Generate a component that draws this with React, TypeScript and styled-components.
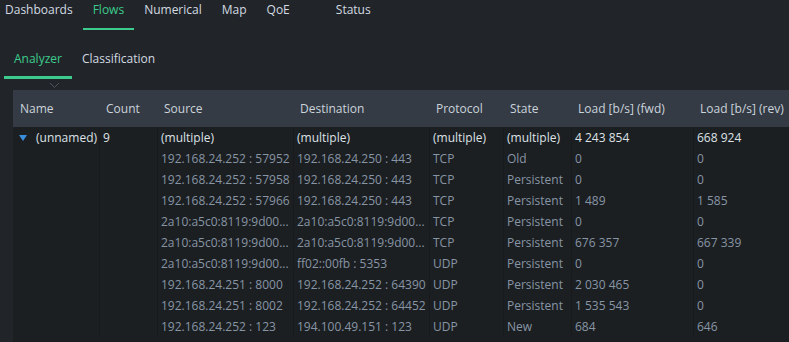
import React from "react";
import styled, { createGlobalStyle } from "styled-components";

const GlobalStyle = createGlobalStyle`
  html, body {
    margin: 0;
    padding: 0;
    background: #212529;
    font-family: "Open Sans", "Noto Sans", sans-serif;
    font-size: 12px;
    overflow: hidden;
  }
`;

const columns = "86px 58px 136px 136px 74px 68px 122px 1fr";

const headers = ["Name", "Count", "Source", "Destination", "Protocol", "State", "Load [b/s] (fwd)", "Load [b/s] (rev)"];

// long IPv6 addresses are shown cut, as the table does
const v6 = "2a10:a5c0:8119:9d00...";

const flows = [
  ["192.168.24.252 : 57952", "192.168.24.250 : 443", "TCP", "Old", "0", "0"],
  ["192.168.24.252 : 57958", "192.168.24.250 : 443", "TCP", "Persistent", "0", "0"],
  ["192.168.24.252 : 57966", "192.168.24.250 : 443", "TCP", "Persistent", "1 489", "1 585"],
  [v6, v6, "TCP", "Persistent", "0", "0"],
  [v6, v6, "TCP", "Persistent", "676 357", "667 339"],
  [v6, "ff02::00fb : 5353", "UDP", "Persistent", "0", "0"],
  ["192.168.24.251 : 8000", "192.168.24.252 : 64390", "UDP", "Persistent", "2 030 465", "0"],
  ["192.168.24.251 : 8002", "192.168.24.252 : 64452", "UDP", "Persistent", "1 535 543", "0"],
  ["192.168.24.252 : 123", "194.100.49.151 : 123", "UDP", "New", "684", "646"],
];

const App = () => {
  return (
    <Page>
      <GlobalStyle />
      <TopTabs>
        <TopTab>Dashboards</TopTab>
        <TopTab active>Flows</TopTab>
        <TopTab>Numerical</TopTab>
        <TopTab>Map</TopTab>
        <TopTab>QoE</TopTab>
        <TopTab gapLeft={26}>Status</TopTab>
      </TopTabs>
      <SubTabs>
        <SubTab active>Analyzer</SubTab>
        <SubTab>Classification</SubTab>
      </SubTabs>
      <Table>
        <HeaderRow>
          {headers.map((h, i) => (
            <HeaderCell key={h}>
              {i === 0 && (
                <SortMark width="9" height="5" viewBox="0 0 9 5">
                  <path d="M0 0 L4.5 4.5 L9 0" fill="none" stroke="#4a535e" strokeWidth="1" />
                </SortMark>
              )}
              {h}
            </HeaderCell>
          ))}
        </HeaderRow>
        <Body>
          <Row>
            <NameCell>
              <svg width="8" height="6" viewBox="0 0 8 6">
                <path d="M0 0 H8 L4 6 Z" fill="#3a8fdc" />
              </svg>
              (unnamed)
            </NameCell>
            <Cell bright>9</Cell>
            <Cell bright>(multiple)</Cell>
            <Cell bright>(multiple)</Cell>
            <Cell bright>(multiple)</Cell>
            <Cell bright>(multiple)</Cell>
            <Cell bright>4 243 854</Cell>
            <Cell bright>668 924</Cell>
          </Row>
          {flows.map((f, i) => (
            <Row key={i}>
              <Cell />
              <Cell />
              {f.map((v, j) => (
                <Cell key={j}>{v}</Cell>
              ))}
            </Row>
          ))}
        </Body>
      </Table>
    </Page>
  );
};

export default App;

const Page = styled.div`
  width: 789px;
  height: 342px;
  background: #212529;
  overflow: hidden;
`;

const TopTabs = styled.div`
  display: flex;
  height: 30px;
  margin-left: -5px;
`;

const TopTab = styled.div<{ active?: boolean; gapLeft?: number }>`
  padding: 1px 10px 0;
  margin-left: ${(p) => p.gapLeft ?? 0}px;
  height: 27px;
  line-height: 17px;
  color: ${(p) => (p.active ? "#3ccb8d" : "#d3dae1")};
  border-bottom: 2px solid ${(p) => (p.active ? "#3ccb8d" : "transparent")};
`;

const SubTabs = styled.div`
  display: flex;
  height: 50px;
  padding: 20px 0 0 4px;
  box-sizing: border-box;
  margin-bottom: 10px;
`;

const SubTab = styled.div<{ active?: boolean }>`
  padding: 0 10px;
  height: 29px;
  line-height: 18px;
  color: ${(p) => (p.active ? "#3ccb8d" : "#d3dae1")};
  border-bottom: 3px solid ${(p) => (p.active ? "#3ccb8d" : "transparent")};
  box-sizing: border-box;
`;

const Table = styled.div`
  margin-left: 13px;
  background: #1c1f22;
  height: 252px;
`;

const HeaderRow = styled.div`
  display: grid;
  grid-template-columns: ${columns};
  height: 37px;
  background: #343b45;
  align-items: center;
`;

const HeaderCell = styled.div`
  position: relative;
  padding-left: 7px;
  color: #cbd3db;
  white-space: nowrap;
`;

const SortMark = styled.svg`
  position: absolute;
  left: 37px;
  top: -17px;
`;

const Body = styled.div`
  display: flex;
  flex-direction: column;
`;

const Row = styled.div`
  display: grid;
  grid-template-columns: ${columns};
  height: 21px;
`;

const Cell = styled.div<{ bright?: boolean }>`
  padding: 0 1px 0 3px;
  line-height: 21px;
  color: ${(p) => (p.bright ? "#dde2e7" : "#8795a5")};
  white-space: nowrap;
  overflow: hidden;
  border-left: 1px solid #17191c;
  &:first-child {
    border-left: none;
  }
`;

const NameCell = styled(Cell)`
  display: flex;
  align-items: center;
  gap: 9px;
  padding-left: 6px;
  color: #dde2e7;
`;
